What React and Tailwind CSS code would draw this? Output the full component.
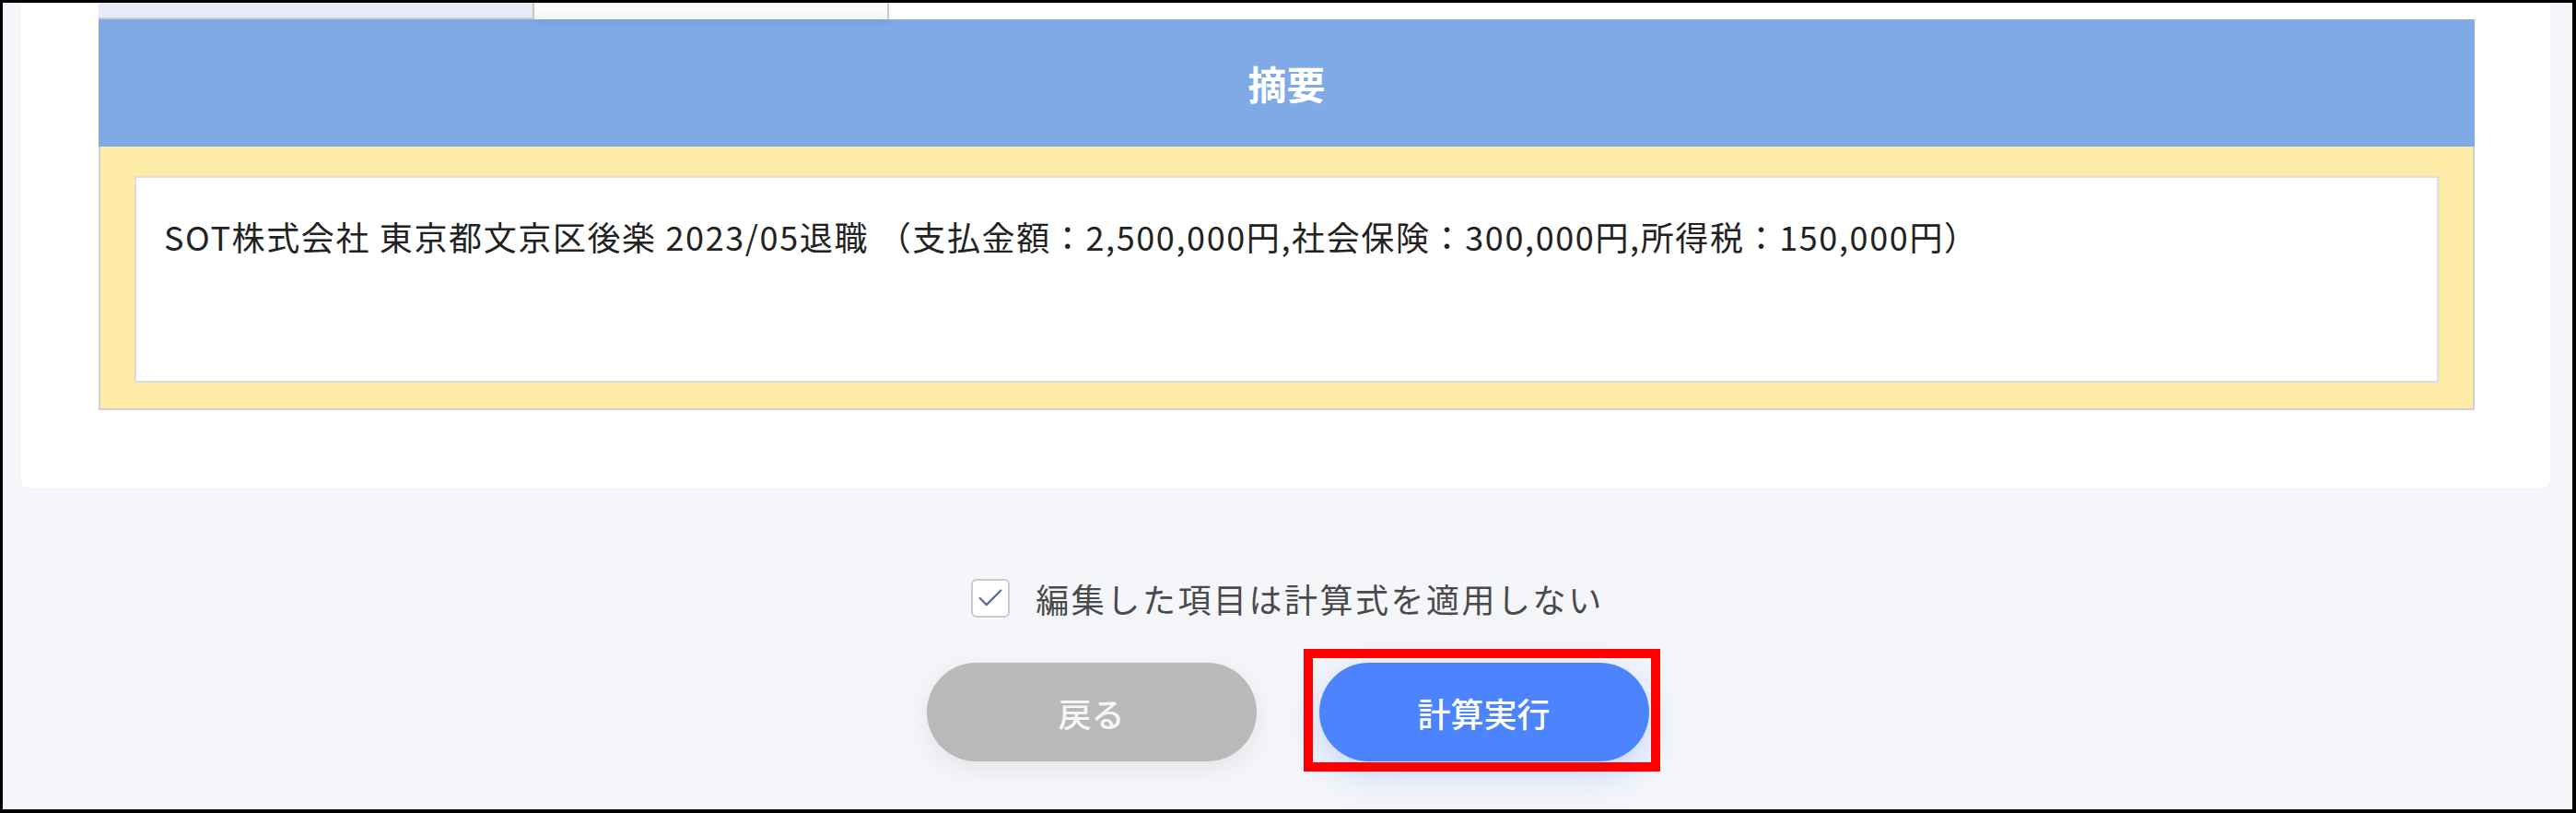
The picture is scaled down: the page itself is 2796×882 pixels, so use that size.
import { Check } from 'lucide-react';

const font = { fontFamily: '"Noto Sans CJK JP", "Noto Sans", sans-serif' };

function Tabs() {
  return (
    <div className="flex h-[18px]">
      <div className="w-[473px] bg-[#e5ecf7] border-r-2 border-b-2 border-[#c9cbd0]" />
      <div className="w-[385px] bg-gradient-to-b from-white to-[#f4f4f4] border-r-2 border-[#c9cbd0] shadow-[0_4px_8px_rgba(0,0,0,0.06)]" />
    </div>
  );
}

function Summary() {
  return (
    <div>
      <div className="h-[138px] bg-[#7faae6] flex items-center justify-center">
        <span className="text-white text-[42px] font-bold leading-none">摘要</span>
      </div>
      <div className="bg-[#feeba6] border-x-2 border-b-2 border-[#d0d0d2] px-[37px] pt-[32px] pb-[28px]">
        <div className="h-[224px] bg-white border-2 border-[#dcdde6] px-[30px] pt-[36px]">
          <p className="text-[36px] leading-[54px] text-[#222] tracking-[0.045em]">
            SOT株式会社 東京都文京区後楽 2023/05退職 （支払金額：2,500,000円,社会保険：300,000円,所得税：150,000円）
          </p>
        </div>
      </div>
    </div>
  );
}

export default function App() {
  return (
    <div
      className="w-[2796px] h-[882px] bg-[#f5f6fa] border-t-[3px] border-l-[3px] border-r-[4px] border-b-[4px] border-black flex flex-col overflow-hidden"
      style={font}
    >
      {/* Card */}
      <div className="ml-[20px] mr-[24px] h-[526px] bg-white rounded-b-[8px] pl-[84px] pr-[82px]">
        <Tabs />
        <Summary />
      </div>

      {/* Option */}
      <div className="mt-[99px] flex items-center justify-center gap-[28px]">
        <div className="w-[42px] h-[42px] rounded-[6px] border-2 border-[#c8cad2] bg-white flex items-center justify-center">
          <Check size={34} strokeWidth={1.6} className="text-[#5d6c93]" />
        </div>
        <span className="text-[36px] leading-none text-[#4a4a4a] tracking-[0.07em]">
          編集した項目は計算式を適用しない
        </span>
      </div>

      {/* Actions */}
      <div className="mt-[49px] flex justify-center gap-[68px]">
        <button className="w-[358px] h-[107px] rounded-full bg-[#b9b9b9] text-[#f7f7f7] text-[36px] font-medium shadow-[0_8px_30px_rgba(0,0,0,0.08)]">
          戻る
        </button>
        <div className="relative">
          <button className="w-[358px] h-[107px] rounded-full bg-[#4c84fe] text-white text-[36px] font-medium shadow-[0_12px_40px_rgba(76,132,254,0.3)]">
            計算実行
          </button>
          <div className="absolute -left-[17px] -right-[12px] -top-[15px] -bottom-[11px] border-[10px] border-[#ff0000] pointer-events-none" />
        </div>
      </div>
    </div>
  );
}
